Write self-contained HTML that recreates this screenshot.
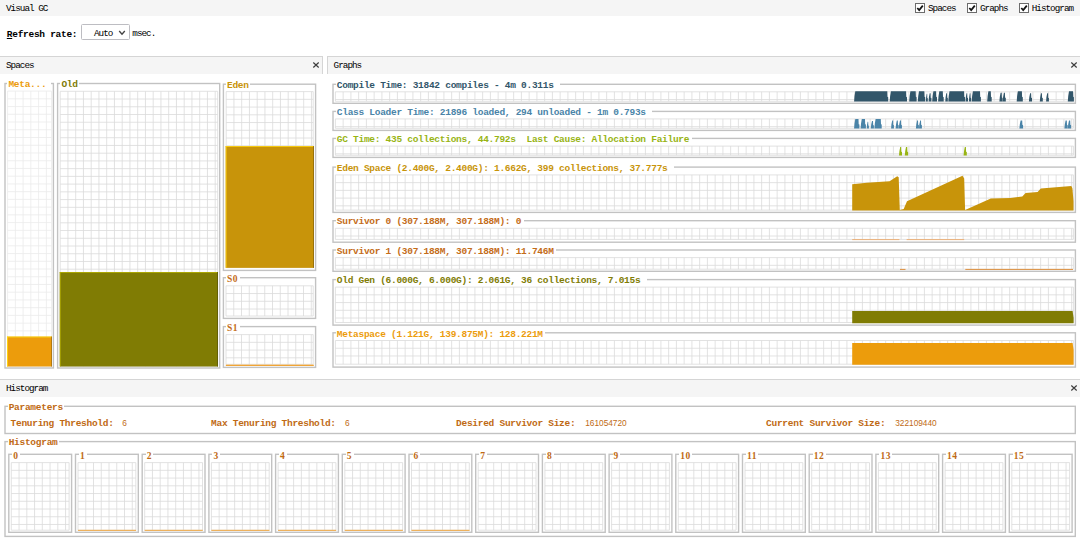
<!DOCTYPE html>
<html><head><meta charset="utf-8"><title>Visual GC</title>
<style>
html,body{margin:0;padding:0;background:#fff}
body{width:1080px;height:538px;position:relative;overflow:hidden;font-family:"Liberation Mono",monospace;font-size:9.3px;color:#000}
.band{position:absolute;background:#f5f5f5}
.ln{position:absolute;background:#d5d5d5}
svg.bg{position:absolute;left:0;top:0}
.fs{position:absolute;box-sizing:border-box;border:1px solid #bdbdbd;box-shadow:1px 1px 0 #eee}
.t,.lg{position:absolute;white-space:pre;line-height:12px;height:12px;margin-top:0.9px}
.r{letter-spacing:-0.98px}
.b{font-weight:bold;font-size:9.5px;letter-spacing:-0.28px}
.lg{margin-top:2.9px;line-height:10px;height:10px;background:#fff;padding:0 1.5px 0 1px;margin-left:-1px}
.sb{font-family:"Liberation Serif",serif;font-weight:bold;font-size:9.5px;letter-spacing:0.5px}
.v{font-family:"Liberation Sans",sans-serif;font-size:8.3px;margin-top:-0.8px}
.cb{position:absolute;box-sizing:border-box;width:10px;height:10px;border:1px solid #6c6c6c;background:#fff}
.sel{position:absolute;box-sizing:border-box;border:1px solid #bdbdc2;border-radius:1.5px;background:#fff}
</style></head>
<body>
<svg class="bg" width="1080" height="538" viewBox="0 0 1080 538">
<path d="M7.60 91.10V366.30M15.35 91.10V366.30M23.10 91.10V366.30M30.85 91.10V366.30M38.60 91.10V366.30M46.35 91.10V366.30M51.50 91.10V366.30M7.60 91.10H51.50M7.60 98.83H51.50M7.60 106.57H51.50M7.60 114.30H51.50M7.60 122.04H51.50M7.60 129.78H51.50M7.60 137.51H51.50M7.60 145.25H51.50M7.60 152.98H51.50M7.60 160.72H51.50M7.60 168.45H51.50M7.60 176.19H51.50M7.60 183.92H51.50M7.60 191.66H51.50M7.60 199.39H51.50M7.60 207.13H51.50M7.60 214.86H51.50M7.60 222.60H51.50M7.60 230.33H51.50M7.60 238.07H51.50M7.60 245.80H51.50M7.60 253.54H51.50M7.60 261.27H51.50M7.60 269.01H51.50M7.60 276.74H51.50M7.60 284.48H51.50M7.60 292.21H51.50M7.60 299.95H51.50M7.60 307.68H51.50M7.60 315.42H51.50M7.60 323.15H51.50M7.60 330.89H51.50M7.60 338.62H51.50M7.60 346.36H51.50M7.60 354.09H51.50M7.60 361.83H51.50M7.60 366.30H51.50" stroke="#ebebeb" stroke-width="0.8" fill="none"/>
<rect x="7.10" y="336.60" width="44.70" height="29.90" fill="#ec9c0c"/>
<rect x="7.10" y="336.60" width="44.70" height="0.80" fill="#ffde11"/>
<rect x="7.10" y="336.60" width="0.80" height="29.90" fill="#ffde11"/>
<rect x="51.00" y="336.60" width="0.80" height="29.90" fill="#a56d08"/>
<path d="M60.20 91.30V366.30M67.95 91.30V366.30M75.70 91.30V366.30M83.45 91.30V366.30M91.20 91.30V366.30M98.95 91.30V366.30M106.70 91.30V366.30M114.45 91.30V366.30M122.20 91.30V366.30M129.95 91.30V366.30M137.70 91.30V366.30M145.45 91.30V366.30M153.20 91.30V366.30M160.95 91.30V366.30M168.70 91.30V366.30M176.45 91.30V366.30M184.20 91.30V366.30M191.95 91.30V366.30M199.70 91.30V366.30M207.45 91.30V366.30M215.20 91.30V366.30M217.70 91.30V366.30M60.20 91.30H217.70M60.20 99.03H217.70M60.20 106.77H217.70M60.20 114.50H217.70M60.20 122.24H217.70M60.20 129.97H217.70M60.20 137.71H217.70M60.20 145.45H217.70M60.20 153.18H217.70M60.20 160.92H217.70M60.20 168.65H217.70M60.20 176.39H217.70M60.20 184.12H217.70M60.20 191.86H217.70M60.20 199.59H217.70M60.20 207.33H217.70M60.20 215.06H217.70M60.20 222.80H217.70M60.20 230.53H217.70M60.20 238.27H217.70M60.20 246.00H217.70M60.20 253.74H217.70M60.20 261.47H217.70M60.20 269.21H217.70M60.20 276.94H217.70M60.20 284.68H217.70M60.20 292.41H217.70M60.20 300.15H217.70M60.20 307.88H217.70M60.20 315.62H217.70M60.20 323.35H217.70M60.20 331.09H217.70M60.20 338.82H217.70M60.20 346.56H217.70M60.20 354.29H217.70M60.20 362.03H217.70M60.20 366.30H217.70" stroke="#dadada" stroke-width="0.8" fill="none"/>
<rect x="59.80" y="272.00" width="158.10" height="94.50" fill="#807c04"/>
<rect x="59.80" y="272.00" width="158.10" height="0.80" fill="#b6b105"/>
<rect x="59.80" y="272.00" width="0.80" height="94.50" fill="#b6b105"/>
<rect x="217.10" y="272.00" width="0.80" height="94.50" fill="#595602"/>
<path d="M226.20 91.60V267.60M233.95 91.60V267.60M241.70 91.60V267.60M249.45 91.60V267.60M257.20 91.60V267.60M264.95 91.60V267.60M272.70 91.60V267.60M280.45 91.60V267.60M288.20 91.60V267.60M295.95 91.60V267.60M303.70 91.60V267.60M311.45 91.60V267.60M313.20 91.60V267.60M226.20 91.60H313.20M226.20 99.33H313.20M226.20 107.07H313.20M226.20 114.80H313.20M226.20 122.54H313.20M226.20 130.28H313.20M226.20 138.01H313.20M226.20 145.75H313.20M226.20 153.48H313.20M226.20 161.22H313.20M226.20 168.95H313.20M226.20 176.69H313.20M226.20 184.42H313.20M226.20 192.16H313.20M226.20 199.89H313.20M226.20 207.63H313.20M226.20 215.36H313.20M226.20 223.10H313.20M226.20 230.83H313.20M226.20 238.57H313.20M226.20 246.30H313.20M226.20 254.04H313.20M226.20 261.77H313.20M226.20 267.60H313.20" stroke="#dadada" stroke-width="0.8" fill="none"/>
<rect x="225.70" y="146.10" width="88.20" height="121.75" fill="#c8940a"/>
<rect x="225.70" y="146.10" width="88.20" height="0.80" fill="#ffd30e"/>
<rect x="225.70" y="146.10" width="0.80" height="121.75" fill="#ffd30e"/>
<rect x="313.10" y="146.10" width="0.80" height="121.75" fill="#8c6707"/>
<path d="M226.00 285.80V316.00M233.75 285.80V316.00M241.50 285.80V316.00M249.25 285.80V316.00M257.00 285.80V316.00M264.75 285.80V316.00M272.50 285.80V316.00M280.25 285.80V316.00M288.00 285.80V316.00M295.75 285.80V316.00M303.50 285.80V316.00M311.25 285.80V316.00M313.20 285.80V316.00M226.00 285.80H313.20M226.00 293.54H313.20M226.00 301.27H313.20M226.00 309.01H313.20M226.00 316.00H313.20" stroke="#dadada" stroke-width="0.8" fill="none"/>
<path d="M226.00 334.60V364.30M233.75 334.60V364.30M241.50 334.60V364.30M249.25 334.60V364.30M257.00 334.60V364.30M264.75 334.60V364.30M272.50 334.60V364.30M280.25 334.60V364.30M288.00 334.60V364.30M295.75 334.60V364.30M303.50 334.60V364.30M311.25 334.60V364.30M313.20 334.60V364.30M226.00 334.60H313.20M226.00 342.34H313.20M226.00 350.07H313.20M226.00 357.81H313.20M226.00 364.30H313.20" stroke="#dadada" stroke-width="0.8" fill="none"/>
<rect x="225.80" y="364.70" width="88.00" height="1.20" fill="#f09c20"/>
<path d="M335.40 91.80V101.30M343.15 91.80V101.30M350.90 91.80V101.30M358.65 91.80V101.30M366.40 91.80V101.30M374.15 91.80V101.30M381.90 91.80V101.30M389.65 91.80V101.30M397.40 91.80V101.30M405.15 91.80V101.30M412.90 91.80V101.30M420.65 91.80V101.30M428.40 91.80V101.30M436.15 91.80V101.30M443.90 91.80V101.30M451.65 91.80V101.30M459.40 91.80V101.30M467.15 91.80V101.30M474.90 91.80V101.30M482.65 91.80V101.30M490.40 91.80V101.30M498.15 91.80V101.30M505.90 91.80V101.30M513.65 91.80V101.30M521.40 91.80V101.30M529.15 91.80V101.30M536.90 91.80V101.30M544.65 91.80V101.30M552.40 91.80V101.30M560.15 91.80V101.30M567.90 91.80V101.30M575.65 91.80V101.30M583.40 91.80V101.30M591.15 91.80V101.30M598.90 91.80V101.30M606.65 91.80V101.30M614.40 91.80V101.30M622.15 91.80V101.30M629.90 91.80V101.30M637.65 91.80V101.30M645.40 91.80V101.30M653.15 91.80V101.30M660.90 91.80V101.30M668.65 91.80V101.30M676.40 91.80V101.30M684.15 91.80V101.30M691.90 91.80V101.30M699.65 91.80V101.30M707.40 91.80V101.30M715.15 91.80V101.30M722.90 91.80V101.30M730.65 91.80V101.30M738.40 91.80V101.30M746.15 91.80V101.30M753.90 91.80V101.30M761.65 91.80V101.30M769.40 91.80V101.30M777.15 91.80V101.30M784.90 91.80V101.30M792.65 91.80V101.30M800.40 91.80V101.30M808.15 91.80V101.30M815.90 91.80V101.30M823.65 91.80V101.30M831.40 91.80V101.30M839.15 91.80V101.30M846.90 91.80V101.30M854.65 91.80V101.30M862.40 91.80V101.30M870.15 91.80V101.30M877.90 91.80V101.30M885.65 91.80V101.30M893.40 91.80V101.30M901.15 91.80V101.30M908.90 91.80V101.30M916.65 91.80V101.30M924.40 91.80V101.30M932.15 91.80V101.30M939.90 91.80V101.30M947.65 91.80V101.30M955.40 91.80V101.30M963.15 91.80V101.30M970.90 91.80V101.30M978.65 91.80V101.30M986.40 91.80V101.30M994.15 91.80V101.30M1001.90 91.80V101.30M1009.65 91.80V101.30M1017.40 91.80V101.30M1025.15 91.80V101.30M1032.90 91.80V101.30M1040.65 91.80V101.30M1048.40 91.80V101.30M1056.15 91.80V101.30M1063.90 91.80V101.30M1071.65 91.80V101.30M1073.40 91.80V101.30M335.40 91.80H1073.40M335.40 99.53H1073.40M335.40 101.30H1073.40" stroke="#dadada" stroke-width="0.8" fill="none"/>
<path d="M335.40 118.90V128.30M343.15 118.90V128.30M350.90 118.90V128.30M358.65 118.90V128.30M366.40 118.90V128.30M374.15 118.90V128.30M381.90 118.90V128.30M389.65 118.90V128.30M397.40 118.90V128.30M405.15 118.90V128.30M412.90 118.90V128.30M420.65 118.90V128.30M428.40 118.90V128.30M436.15 118.90V128.30M443.90 118.90V128.30M451.65 118.90V128.30M459.40 118.90V128.30M467.15 118.90V128.30M474.90 118.90V128.30M482.65 118.90V128.30M490.40 118.90V128.30M498.15 118.90V128.30M505.90 118.90V128.30M513.65 118.90V128.30M521.40 118.90V128.30M529.15 118.90V128.30M536.90 118.90V128.30M544.65 118.90V128.30M552.40 118.90V128.30M560.15 118.90V128.30M567.90 118.90V128.30M575.65 118.90V128.30M583.40 118.90V128.30M591.15 118.90V128.30M598.90 118.90V128.30M606.65 118.90V128.30M614.40 118.90V128.30M622.15 118.90V128.30M629.90 118.90V128.30M637.65 118.90V128.30M645.40 118.90V128.30M653.15 118.90V128.30M660.90 118.90V128.30M668.65 118.90V128.30M676.40 118.90V128.30M684.15 118.90V128.30M691.90 118.90V128.30M699.65 118.90V128.30M707.40 118.90V128.30M715.15 118.90V128.30M722.90 118.90V128.30M730.65 118.90V128.30M738.40 118.90V128.30M746.15 118.90V128.30M753.90 118.90V128.30M761.65 118.90V128.30M769.40 118.90V128.30M777.15 118.90V128.30M784.90 118.90V128.30M792.65 118.90V128.30M800.40 118.90V128.30M808.15 118.90V128.30M815.90 118.90V128.30M823.65 118.90V128.30M831.40 118.90V128.30M839.15 118.90V128.30M846.90 118.90V128.30M854.65 118.90V128.30M862.40 118.90V128.30M870.15 118.90V128.30M877.90 118.90V128.30M885.65 118.90V128.30M893.40 118.90V128.30M901.15 118.90V128.30M908.90 118.90V128.30M916.65 118.90V128.30M924.40 118.90V128.30M932.15 118.90V128.30M939.90 118.90V128.30M947.65 118.90V128.30M955.40 118.90V128.30M963.15 118.90V128.30M970.90 118.90V128.30M978.65 118.90V128.30M986.40 118.90V128.30M994.15 118.90V128.30M1001.90 118.90V128.30M1009.65 118.90V128.30M1017.40 118.90V128.30M1025.15 118.90V128.30M1032.90 118.90V128.30M1040.65 118.90V128.30M1048.40 118.90V128.30M1056.15 118.90V128.30M1063.90 118.90V128.30M1071.65 118.90V128.30M1073.40 118.90V128.30M335.40 118.90H1073.40M335.40 126.64H1073.40M335.40 128.30H1073.40" stroke="#dadada" stroke-width="0.8" fill="none"/>
<path d="M335.40 146.10V155.30M343.15 146.10V155.30M350.90 146.10V155.30M358.65 146.10V155.30M366.40 146.10V155.30M374.15 146.10V155.30M381.90 146.10V155.30M389.65 146.10V155.30M397.40 146.10V155.30M405.15 146.10V155.30M412.90 146.10V155.30M420.65 146.10V155.30M428.40 146.10V155.30M436.15 146.10V155.30M443.90 146.10V155.30M451.65 146.10V155.30M459.40 146.10V155.30M467.15 146.10V155.30M474.90 146.10V155.30M482.65 146.10V155.30M490.40 146.10V155.30M498.15 146.10V155.30M505.90 146.10V155.30M513.65 146.10V155.30M521.40 146.10V155.30M529.15 146.10V155.30M536.90 146.10V155.30M544.65 146.10V155.30M552.40 146.10V155.30M560.15 146.10V155.30M567.90 146.10V155.30M575.65 146.10V155.30M583.40 146.10V155.30M591.15 146.10V155.30M598.90 146.10V155.30M606.65 146.10V155.30M614.40 146.10V155.30M622.15 146.10V155.30M629.90 146.10V155.30M637.65 146.10V155.30M645.40 146.10V155.30M653.15 146.10V155.30M660.90 146.10V155.30M668.65 146.10V155.30M676.40 146.10V155.30M684.15 146.10V155.30M691.90 146.10V155.30M699.65 146.10V155.30M707.40 146.10V155.30M715.15 146.10V155.30M722.90 146.10V155.30M730.65 146.10V155.30M738.40 146.10V155.30M746.15 146.10V155.30M753.90 146.10V155.30M761.65 146.10V155.30M769.40 146.10V155.30M777.15 146.10V155.30M784.90 146.10V155.30M792.65 146.10V155.30M800.40 146.10V155.30M808.15 146.10V155.30M815.90 146.10V155.30M823.65 146.10V155.30M831.40 146.10V155.30M839.15 146.10V155.30M846.90 146.10V155.30M854.65 146.10V155.30M862.40 146.10V155.30M870.15 146.10V155.30M877.90 146.10V155.30M885.65 146.10V155.30M893.40 146.10V155.30M901.15 146.10V155.30M908.90 146.10V155.30M916.65 146.10V155.30M924.40 146.10V155.30M932.15 146.10V155.30M939.90 146.10V155.30M947.65 146.10V155.30M955.40 146.10V155.30M963.15 146.10V155.30M970.90 146.10V155.30M978.65 146.10V155.30M986.40 146.10V155.30M994.15 146.10V155.30M1001.90 146.10V155.30M1009.65 146.10V155.30M1017.40 146.10V155.30M1025.15 146.10V155.30M1032.90 146.10V155.30M1040.65 146.10V155.30M1048.40 146.10V155.30M1056.15 146.10V155.30M1063.90 146.10V155.30M1071.65 146.10V155.30M1073.40 146.10V155.30M335.40 146.10H1073.40M335.40 153.84H1073.40M335.40 155.30H1073.40" stroke="#dadada" stroke-width="0.8" fill="none"/>
<path d="M335.40 174.90V210.10M343.15 174.90V210.10M350.90 174.90V210.10M358.65 174.90V210.10M366.40 174.90V210.10M374.15 174.90V210.10M381.90 174.90V210.10M389.65 174.90V210.10M397.40 174.90V210.10M405.15 174.90V210.10M412.90 174.90V210.10M420.65 174.90V210.10M428.40 174.90V210.10M436.15 174.90V210.10M443.90 174.90V210.10M451.65 174.90V210.10M459.40 174.90V210.10M467.15 174.90V210.10M474.90 174.90V210.10M482.65 174.90V210.10M490.40 174.90V210.10M498.15 174.90V210.10M505.90 174.90V210.10M513.65 174.90V210.10M521.40 174.90V210.10M529.15 174.90V210.10M536.90 174.90V210.10M544.65 174.90V210.10M552.40 174.90V210.10M560.15 174.90V210.10M567.90 174.90V210.10M575.65 174.90V210.10M583.40 174.90V210.10M591.15 174.90V210.10M598.90 174.90V210.10M606.65 174.90V210.10M614.40 174.90V210.10M622.15 174.90V210.10M629.90 174.90V210.10M637.65 174.90V210.10M645.40 174.90V210.10M653.15 174.90V210.10M660.90 174.90V210.10M668.65 174.90V210.10M676.40 174.90V210.10M684.15 174.90V210.10M691.90 174.90V210.10M699.65 174.90V210.10M707.40 174.90V210.10M715.15 174.90V210.10M722.90 174.90V210.10M730.65 174.90V210.10M738.40 174.90V210.10M746.15 174.90V210.10M753.90 174.90V210.10M761.65 174.90V210.10M769.40 174.90V210.10M777.15 174.90V210.10M784.90 174.90V210.10M792.65 174.90V210.10M800.40 174.90V210.10M808.15 174.90V210.10M815.90 174.90V210.10M823.65 174.90V210.10M831.40 174.90V210.10M839.15 174.90V210.10M846.90 174.90V210.10M854.65 174.90V210.10M862.40 174.90V210.10M870.15 174.90V210.10M877.90 174.90V210.10M885.65 174.90V210.10M893.40 174.90V210.10M901.15 174.90V210.10M908.90 174.90V210.10M916.65 174.90V210.10M924.40 174.90V210.10M932.15 174.90V210.10M939.90 174.90V210.10M947.65 174.90V210.10M955.40 174.90V210.10M963.15 174.90V210.10M970.90 174.90V210.10M978.65 174.90V210.10M986.40 174.90V210.10M994.15 174.90V210.10M1001.90 174.90V210.10M1009.65 174.90V210.10M1017.40 174.90V210.10M1025.15 174.90V210.10M1032.90 174.90V210.10M1040.65 174.90V210.10M1048.40 174.90V210.10M1056.15 174.90V210.10M1063.90 174.90V210.10M1071.65 174.90V210.10M1073.40 174.90V210.10M335.40 174.90H1073.40M335.40 182.64H1073.40M335.40 190.37H1073.40M335.40 198.11H1073.40M335.40 205.84H1073.40M335.40 210.10H1073.40" stroke="#dadada" stroke-width="0.8" fill="none"/>
<path d="M335.40 228.30V239.40M343.15 228.30V239.40M350.90 228.30V239.40M358.65 228.30V239.40M366.40 228.30V239.40M374.15 228.30V239.40M381.90 228.30V239.40M389.65 228.30V239.40M397.40 228.30V239.40M405.15 228.30V239.40M412.90 228.30V239.40M420.65 228.30V239.40M428.40 228.30V239.40M436.15 228.30V239.40M443.90 228.30V239.40M451.65 228.30V239.40M459.40 228.30V239.40M467.15 228.30V239.40M474.90 228.30V239.40M482.65 228.30V239.40M490.40 228.30V239.40M498.15 228.30V239.40M505.90 228.30V239.40M513.65 228.30V239.40M521.40 228.30V239.40M529.15 228.30V239.40M536.90 228.30V239.40M544.65 228.30V239.40M552.40 228.30V239.40M560.15 228.30V239.40M567.90 228.30V239.40M575.65 228.30V239.40M583.40 228.30V239.40M591.15 228.30V239.40M598.90 228.30V239.40M606.65 228.30V239.40M614.40 228.30V239.40M622.15 228.30V239.40M629.90 228.30V239.40M637.65 228.30V239.40M645.40 228.30V239.40M653.15 228.30V239.40M660.90 228.30V239.40M668.65 228.30V239.40M676.40 228.30V239.40M684.15 228.30V239.40M691.90 228.30V239.40M699.65 228.30V239.40M707.40 228.30V239.40M715.15 228.30V239.40M722.90 228.30V239.40M730.65 228.30V239.40M738.40 228.30V239.40M746.15 228.30V239.40M753.90 228.30V239.40M761.65 228.30V239.40M769.40 228.30V239.40M777.15 228.30V239.40M784.90 228.30V239.40M792.65 228.30V239.40M800.40 228.30V239.40M808.15 228.30V239.40M815.90 228.30V239.40M823.65 228.30V239.40M831.40 228.30V239.40M839.15 228.30V239.40M846.90 228.30V239.40M854.65 228.30V239.40M862.40 228.30V239.40M870.15 228.30V239.40M877.90 228.30V239.40M885.65 228.30V239.40M893.40 228.30V239.40M901.15 228.30V239.40M908.90 228.30V239.40M916.65 228.30V239.40M924.40 228.30V239.40M932.15 228.30V239.40M939.90 228.30V239.40M947.65 228.30V239.40M955.40 228.30V239.40M963.15 228.30V239.40M970.90 228.30V239.40M978.65 228.30V239.40M986.40 228.30V239.40M994.15 228.30V239.40M1001.90 228.30V239.40M1009.65 228.30V239.40M1017.40 228.30V239.40M1025.15 228.30V239.40M1032.90 228.30V239.40M1040.65 228.30V239.40M1048.40 228.30V239.40M1056.15 228.30V239.40M1063.90 228.30V239.40M1071.65 228.30V239.40M1073.40 228.30V239.40M335.40 228.30H1073.40M335.40 236.04H1073.40M335.40 239.40H1073.40" stroke="#dadada" stroke-width="0.8" fill="none"/>
<path d="M335.40 257.60V269.20M343.15 257.60V269.20M350.90 257.60V269.20M358.65 257.60V269.20M366.40 257.60V269.20M374.15 257.60V269.20M381.90 257.60V269.20M389.65 257.60V269.20M397.40 257.60V269.20M405.15 257.60V269.20M412.90 257.60V269.20M420.65 257.60V269.20M428.40 257.60V269.20M436.15 257.60V269.20M443.90 257.60V269.20M451.65 257.60V269.20M459.40 257.60V269.20M467.15 257.60V269.20M474.90 257.60V269.20M482.65 257.60V269.20M490.40 257.60V269.20M498.15 257.60V269.20M505.90 257.60V269.20M513.65 257.60V269.20M521.40 257.60V269.20M529.15 257.60V269.20M536.90 257.60V269.20M544.65 257.60V269.20M552.40 257.60V269.20M560.15 257.60V269.20M567.90 257.60V269.20M575.65 257.60V269.20M583.40 257.60V269.20M591.15 257.60V269.20M598.90 257.60V269.20M606.65 257.60V269.20M614.40 257.60V269.20M622.15 257.60V269.20M629.90 257.60V269.20M637.65 257.60V269.20M645.40 257.60V269.20M653.15 257.60V269.20M660.90 257.60V269.20M668.65 257.60V269.20M676.40 257.60V269.20M684.15 257.60V269.20M691.90 257.60V269.20M699.65 257.60V269.20M707.40 257.60V269.20M715.15 257.60V269.20M722.90 257.60V269.20M730.65 257.60V269.20M738.40 257.60V269.20M746.15 257.60V269.20M753.90 257.60V269.20M761.65 257.60V269.20M769.40 257.60V269.20M777.15 257.60V269.20M784.90 257.60V269.20M792.65 257.60V269.20M800.40 257.60V269.20M808.15 257.60V269.20M815.90 257.60V269.20M823.65 257.60V269.20M831.40 257.60V269.20M839.15 257.60V269.20M846.90 257.60V269.20M854.65 257.60V269.20M862.40 257.60V269.20M870.15 257.60V269.20M877.90 257.60V269.20M885.65 257.60V269.20M893.40 257.60V269.20M901.15 257.60V269.20M908.90 257.60V269.20M916.65 257.60V269.20M924.40 257.60V269.20M932.15 257.60V269.20M939.90 257.60V269.20M947.65 257.60V269.20M955.40 257.60V269.20M963.15 257.60V269.20M970.90 257.60V269.20M978.65 257.60V269.20M986.40 257.60V269.20M994.15 257.60V269.20M1001.90 257.60V269.20M1009.65 257.60V269.20M1017.40 257.60V269.20M1025.15 257.60V269.20M1032.90 257.60V269.20M1040.65 257.60V269.20M1048.40 257.60V269.20M1056.15 257.60V269.20M1063.90 257.60V269.20M1071.65 257.60V269.20M1073.40 257.60V269.20M335.40 257.60H1073.40M335.40 265.34H1073.40M335.40 269.20H1073.40" stroke="#dadada" stroke-width="0.8" fill="none"/>
<path d="M335.40 287.10V322.50M343.15 287.10V322.50M350.90 287.10V322.50M358.65 287.10V322.50M366.40 287.10V322.50M374.15 287.10V322.50M381.90 287.10V322.50M389.65 287.10V322.50M397.40 287.10V322.50M405.15 287.10V322.50M412.90 287.10V322.50M420.65 287.10V322.50M428.40 287.10V322.50M436.15 287.10V322.50M443.90 287.10V322.50M451.65 287.10V322.50M459.40 287.10V322.50M467.15 287.10V322.50M474.90 287.10V322.50M482.65 287.10V322.50M490.40 287.10V322.50M498.15 287.10V322.50M505.90 287.10V322.50M513.65 287.10V322.50M521.40 287.10V322.50M529.15 287.10V322.50M536.90 287.10V322.50M544.65 287.10V322.50M552.40 287.10V322.50M560.15 287.10V322.50M567.90 287.10V322.50M575.65 287.10V322.50M583.40 287.10V322.50M591.15 287.10V322.50M598.90 287.10V322.50M606.65 287.10V322.50M614.40 287.10V322.50M622.15 287.10V322.50M629.90 287.10V322.50M637.65 287.10V322.50M645.40 287.10V322.50M653.15 287.10V322.50M660.90 287.10V322.50M668.65 287.10V322.50M676.40 287.10V322.50M684.15 287.10V322.50M691.90 287.10V322.50M699.65 287.10V322.50M707.40 287.10V322.50M715.15 287.10V322.50M722.90 287.10V322.50M730.65 287.10V322.50M738.40 287.10V322.50M746.15 287.10V322.50M753.90 287.10V322.50M761.65 287.10V322.50M769.40 287.10V322.50M777.15 287.10V322.50M784.90 287.10V322.50M792.65 287.10V322.50M800.40 287.10V322.50M808.15 287.10V322.50M815.90 287.10V322.50M823.65 287.10V322.50M831.40 287.10V322.50M839.15 287.10V322.50M846.90 287.10V322.50M854.65 287.10V322.50M862.40 287.10V322.50M870.15 287.10V322.50M877.90 287.10V322.50M885.65 287.10V322.50M893.40 287.10V322.50M901.15 287.10V322.50M908.90 287.10V322.50M916.65 287.10V322.50M924.40 287.10V322.50M932.15 287.10V322.50M939.90 287.10V322.50M947.65 287.10V322.50M955.40 287.10V322.50M963.15 287.10V322.50M970.90 287.10V322.50M978.65 287.10V322.50M986.40 287.10V322.50M994.15 287.10V322.50M1001.90 287.10V322.50M1009.65 287.10V322.50M1017.40 287.10V322.50M1025.15 287.10V322.50M1032.90 287.10V322.50M1040.65 287.10V322.50M1048.40 287.10V322.50M1056.15 287.10V322.50M1063.90 287.10V322.50M1071.65 287.10V322.50M1073.40 287.10V322.50M335.40 287.10H1073.40M335.40 294.84H1073.40M335.40 302.57H1073.40M335.40 310.31H1073.40M335.40 318.04H1073.40M335.40 322.50H1073.40" stroke="#dadada" stroke-width="0.8" fill="none"/>
<path d="M335.40 340.50V364.20M343.15 340.50V364.20M350.90 340.50V364.20M358.65 340.50V364.20M366.40 340.50V364.20M374.15 340.50V364.20M381.90 340.50V364.20M389.65 340.50V364.20M397.40 340.50V364.20M405.15 340.50V364.20M412.90 340.50V364.20M420.65 340.50V364.20M428.40 340.50V364.20M436.15 340.50V364.20M443.90 340.50V364.20M451.65 340.50V364.20M459.40 340.50V364.20M467.15 340.50V364.20M474.90 340.50V364.20M482.65 340.50V364.20M490.40 340.50V364.20M498.15 340.50V364.20M505.90 340.50V364.20M513.65 340.50V364.20M521.40 340.50V364.20M529.15 340.50V364.20M536.90 340.50V364.20M544.65 340.50V364.20M552.40 340.50V364.20M560.15 340.50V364.20M567.90 340.50V364.20M575.65 340.50V364.20M583.40 340.50V364.20M591.15 340.50V364.20M598.90 340.50V364.20M606.65 340.50V364.20M614.40 340.50V364.20M622.15 340.50V364.20M629.90 340.50V364.20M637.65 340.50V364.20M645.40 340.50V364.20M653.15 340.50V364.20M660.90 340.50V364.20M668.65 340.50V364.20M676.40 340.50V364.20M684.15 340.50V364.20M691.90 340.50V364.20M699.65 340.50V364.20M707.40 340.50V364.20M715.15 340.50V364.20M722.90 340.50V364.20M730.65 340.50V364.20M738.40 340.50V364.20M746.15 340.50V364.20M753.90 340.50V364.20M761.65 340.50V364.20M769.40 340.50V364.20M777.15 340.50V364.20M784.90 340.50V364.20M792.65 340.50V364.20M800.40 340.50V364.20M808.15 340.50V364.20M815.90 340.50V364.20M823.65 340.50V364.20M831.40 340.50V364.20M839.15 340.50V364.20M846.90 340.50V364.20M854.65 340.50V364.20M862.40 340.50V364.20M870.15 340.50V364.20M877.90 340.50V364.20M885.65 340.50V364.20M893.40 340.50V364.20M901.15 340.50V364.20M908.90 340.50V364.20M916.65 340.50V364.20M924.40 340.50V364.20M932.15 340.50V364.20M939.90 340.50V364.20M947.65 340.50V364.20M955.40 340.50V364.20M963.15 340.50V364.20M970.90 340.50V364.20M978.65 340.50V364.20M986.40 340.50V364.20M994.15 340.50V364.20M1001.90 340.50V364.20M1009.65 340.50V364.20M1017.40 340.50V364.20M1025.15 340.50V364.20M1032.90 340.50V364.20M1040.65 340.50V364.20M1048.40 340.50V364.20M1056.15 340.50V364.20M1063.90 340.50V364.20M1071.65 340.50V364.20M1073.40 340.50V364.20M335.40 340.50H1073.40M335.40 348.24H1073.40M335.40 355.97H1073.40M335.40 364.20H1073.40" stroke="#dadada" stroke-width="0.8" fill="none"/>
<polygon points="854.1,101.4 854.5,96.3 855.3,91.2 887.3,91.2 887.5,96.8 888.2,97.3 888.2,101.4" fill="#32566a"/>
<polygon points="889.7,101.4 890.1,96.3 890.9,91.2 906.1,91.2 906.3,96.8 907.0,97.3 907.0,101.4" fill="#32566a"/>
<polygon points="909.2,101.4 909.6,96.3 910.4,91.2 915.7,91.2 915.9,96.8 916.6,97.3 916.6,101.4" fill="#32566a"/>
<polygon points="917.8,101.4 918.2,96.3 919.0,91.2 924.3,91.2 924.5,96.8 925.2,97.3 925.2,101.4" fill="#32566a"/>
<polygon points="925.9,101.4 926.1,97.6 926.7,93.8 927.2,93.8 927.3,98.0 927.8,98.3 927.8,101.4" fill="#32566a"/>
<polygon points="928.6,101.4 928.9,97.3 929.7,93.2 930.6,93.2 930.7,97.7 931.4,98.1 931.4,101.4" fill="#32566a"/>
<polygon points="932.2,101.4 932.6,96.3 933.4,91.2 936.1,91.2 936.3,96.8 937.0,97.3 937.0,101.4" fill="#32566a"/>
<polygon points="938.1,101.4 938.5,96.3 939.3,91.2 942.8,91.2 943.0,96.8 943.7,97.3 943.7,101.4" fill="#32566a"/>
<polygon points="945.3,101.4 945.6,97.3 946.3,93.2 947.0,93.2 947.2,97.7 947.8,98.1 947.8,101.4" fill="#32566a"/>
<polygon points="948.3,101.4 948.7,96.3 949.5,91.2 964.1,91.2 964.3,96.8 965.0,97.3 965.0,101.4" fill="#32566a"/>
<polygon points="965.5,101.4 965.8,97.3 966.5,93.2 967.2,93.2 967.4,97.7 968.0,98.1 968.0,101.4" fill="#32566a"/>
<polygon points="968.9,101.4 969.2,97.3 969.8,93.2 970.4,93.2 970.6,97.7 971.1,98.1 971.1,101.4" fill="#32566a"/>
<polygon points="971.7,101.4 972.1,96.3 972.9,91.2 980.0,91.2 980.2,96.8 980.9,97.3 980.9,101.4" fill="#32566a"/>
<polygon points="987.2,101.4 987.6,96.3 988.4,91.2 990.8,91.2 991.0,96.8 991.7,97.3 991.7,101.4" fill="#32566a"/>
<polygon points="999.4,101.4 999.8,97.1 1000.6,92.7 1001.7,92.7 1001.9,97.5 1002.6,97.9 1002.6,101.4" fill="#32566a"/>
<polygon points="1002.7,101.4 1003.1,97.1 1003.9,92.7 1004.9,92.7 1005.1,97.5 1005.8,97.9 1005.8,101.4" fill="#32566a"/>
<polygon points="1016.7,101.4 1017.1,96.3 1017.9,91.2 1021.9,91.2 1022.1,96.8 1022.8,97.3 1022.8,101.4" fill="#32566a"/>
<polygon points="1028.9,101.4 1029.3,97.3 1030.1,93.2 1031.1,93.2 1031.3,97.7 1032.0,98.1 1032.0,101.4" fill="#32566a"/>
<polygon points="1039.8,101.4 1040.2,97.3 1041.0,93.2 1041.9,93.2 1042.1,97.7 1042.8,98.1 1042.8,101.4" fill="#32566a"/>
<polygon points="1046.1,101.4 1046.4,97.3 1047.2,93.2 1048.1,93.2 1048.2,97.7 1048.9,98.1 1048.9,101.4" fill="#32566a"/>
<polygon points="1067.8,101.4 1068.2,96.3 1069.0,91.2 1073.0,91.2 1073.2,96.8 1073.9,97.3 1073.9,101.4" fill="#32566a"/>
<polygon points="854.1,128.4 854.5,123.7 855.3,119.0 858.5,119.0 858.7,124.2 859.4,124.6 859.4,128.4" fill="#4a84a8"/>
<polygon points="860.6,128.4 861.0,123.7 861.8,119.0 865.0,119.0 865.2,124.2 865.9,124.6 865.9,128.4" fill="#4a84a8"/>
<polygon points="866.7,128.4 867.0,125.1 867.6,121.8 868.2,121.8 868.4,125.4 868.9,125.8 868.9,128.4" fill="#4a84a8"/>
<polygon points="870.8,128.4 871.2,124.6 872.0,120.9 873.0,120.9 873.2,125.0 873.9,125.4 873.9,128.4" fill="#4a84a8"/>
<polygon points="874.4,128.4 874.8,123.7 875.6,119.0 880.8,119.0 881.0,124.2 881.7,124.6 881.7,128.4" fill="#4a84a8"/>
<polygon points="891.1,128.4 891.4,124.4 892.2,120.4 893.1,120.4 893.2,124.8 893.9,125.2 893.9,128.4" fill="#4a84a8"/>
<polygon points="895.6,128.4 896.0,124.4 896.8,120.4 897.8,120.4 898.0,124.8 898.7,125.2 898.7,128.4" fill="#4a84a8"/>
<polygon points="898.8,128.4 899.2,124.4 900.0,120.4 901.0,120.4 901.2,124.8 901.9,125.2 901.9,128.4" fill="#4a84a8"/>
<polygon points="915.9,128.4 916.3,124.4 917.1,120.4 918.0,120.4 918.2,124.8 918.9,125.2 918.9,128.4" fill="#4a84a8"/>
<polygon points="919.0,128.4 919.3,124.4 920.2,120.4 921.0,120.4 921.2,124.8 921.9,125.2 921.9,128.4" fill="#4a84a8"/>
<polygon points="1019.4,128.4 1019.8,124.4 1020.6,120.4 1022.2,120.4 1022.4,124.8 1023.1,125.2 1023.1,128.4" fill="#4a84a8"/>
<polygon points="1064.4,128.4 1064.8,124.4 1065.6,120.4 1066.8,120.4 1067.0,124.8 1067.7,125.2 1067.7,128.4" fill="#4a84a8"/>
<polygon points="1067.8,128.4 1068.2,124.4 1069.0,120.4 1070.2,120.4 1070.4,124.8 1071.1,125.2 1071.1,128.4" fill="#4a84a8"/>
<polygon points="899.0,155.6 899.4,151.2 900.2,146.9 901.1,146.9 901.3,151.7 902.0,152.1 902.0,155.6" fill="#98b414"/>
<polygon points="904.8,155.6 905.2,151.2 906.0,146.9 907.2,146.9 907.4,151.7 908.1,152.1 908.1,155.6" fill="#98b414"/>
<polygon points="963.6,155.6 964.0,151.2 964.8,146.9 965.9,146.9 966.1,151.7 966.8,152.1 966.8,155.6" fill="#98b414"/>
<polygon points="852.2,210.4 852.2,184.3 866.8,182.8 889.6,181.3 897.2,176.3 898.7,177.3 899.8,210.0 903.7,208.9 907.0,201.3 962.5,175.8 964.2,178.4 965.1,210.0 990.8,198.4 1010.4,198.0 1022.3,196.5 1025.6,193.0 1037.6,191.9 1040.8,188.6 1071.3,186.0 1072.4,188.2 1073.5,201.3 1073.5,210.4" fill="#c8940a"/>
<rect x="852.20" y="239.10" width="47.20" height="1.00" fill="#eab078"/>
<rect x="906.60" y="239.10" width="57.60" height="1.00" fill="#eab078"/>
<rect x="900.00" y="268.90" width="5.50" height="1.00" fill="#dc9040"/>
<rect x="965.30" y="268.90" width="107.70" height="1.00" fill="#dc9040"/>
<polygon points="852.2,311.1 1072.6,311.1 1073.6,318.0 1073.6,323.2 852.2,323.2" fill="#807c04"/>
<polygon points="852.2,342.9 1072.6,342.9 1073.6,350.0 1073.6,364.7 852.2,364.7" fill="#ec9c0c"/>
<path d="M11.30 462.60V530.20M19.05 462.60V530.20M26.80 462.60V530.20M34.55 462.60V530.20M42.30 462.60V530.20M50.05 462.60V530.20M57.80 462.60V530.20M65.55 462.60V530.20M69.10 462.60V530.20M11.30 462.60H69.10M11.30 470.34H69.10M11.30 478.07H69.10M11.30 485.81H69.10M11.30 493.54H69.10M11.30 501.28H69.10M11.30 509.01H69.10M11.30 516.75H69.10M11.30 524.48H69.10M11.30 530.20H69.10" stroke="#dadada" stroke-width="0.8" fill="none"/>
<path d="M78.00 462.60V530.20M85.75 462.60V530.20M93.50 462.60V530.20M101.25 462.60V530.20M109.00 462.60V530.20M116.75 462.60V530.20M124.50 462.60V530.20M132.25 462.60V530.20M135.80 462.60V530.20M78.00 462.60H135.80M78.00 470.34H135.80M78.00 478.07H135.80M78.00 485.81H135.80M78.00 493.54H135.80M78.00 501.28H135.80M78.00 509.01H135.80M78.00 516.75H135.80M78.00 524.48H135.80M78.00 530.20H135.80" stroke="#dadada" stroke-width="0.8" fill="none"/>
<rect x="77.90" y="529.85" width="58.20" height="0.90" fill="#f0a030"/>
<path d="M144.70 462.60V530.20M152.45 462.60V530.20M160.20 462.60V530.20M167.95 462.60V530.20M175.70 462.60V530.20M183.45 462.60V530.20M191.20 462.60V530.20M198.95 462.60V530.20M202.50 462.60V530.20M144.70 462.60H202.50M144.70 470.34H202.50M144.70 478.07H202.50M144.70 485.81H202.50M144.70 493.54H202.50M144.70 501.28H202.50M144.70 509.01H202.50M144.70 516.75H202.50M144.70 524.48H202.50M144.70 530.20H202.50" stroke="#dadada" stroke-width="0.8" fill="none"/>
<rect x="144.60" y="529.85" width="58.20" height="0.90" fill="#f0a030"/>
<path d="M211.40 462.60V530.20M219.15 462.60V530.20M226.90 462.60V530.20M234.65 462.60V530.20M242.40 462.60V530.20M250.15 462.60V530.20M257.90 462.60V530.20M265.65 462.60V530.20M269.20 462.60V530.20M211.40 462.60H269.20M211.40 470.34H269.20M211.40 478.07H269.20M211.40 485.81H269.20M211.40 493.54H269.20M211.40 501.28H269.20M211.40 509.01H269.20M211.40 516.75H269.20M211.40 524.48H269.20M211.40 530.20H269.20" stroke="#dadada" stroke-width="0.8" fill="none"/>
<rect x="211.30" y="529.85" width="58.20" height="0.90" fill="#f0a030"/>
<path d="M278.10 462.60V530.20M285.85 462.60V530.20M293.60 462.60V530.20M301.35 462.60V530.20M309.10 462.60V530.20M316.85 462.60V530.20M324.60 462.60V530.20M332.35 462.60V530.20M335.90 462.60V530.20M278.10 462.60H335.90M278.10 470.34H335.90M278.10 478.07H335.90M278.10 485.81H335.90M278.10 493.54H335.90M278.10 501.28H335.90M278.10 509.01H335.90M278.10 516.75H335.90M278.10 524.48H335.90M278.10 530.20H335.90" stroke="#dadada" stroke-width="0.8" fill="none"/>
<rect x="278.00" y="529.85" width="58.20" height="0.90" fill="#f0a030"/>
<path d="M344.80 462.60V530.20M352.55 462.60V530.20M360.30 462.60V530.20M368.05 462.60V530.20M375.80 462.60V530.20M383.55 462.60V530.20M391.30 462.60V530.20M399.05 462.60V530.20M402.60 462.60V530.20M344.80 462.60H402.60M344.80 470.34H402.60M344.80 478.07H402.60M344.80 485.81H402.60M344.80 493.54H402.60M344.80 501.28H402.60M344.80 509.01H402.60M344.80 516.75H402.60M344.80 524.48H402.60M344.80 530.20H402.60" stroke="#dadada" stroke-width="0.8" fill="none"/>
<rect x="344.70" y="529.85" width="58.20" height="0.90" fill="#f0a030"/>
<path d="M411.50 462.60V530.20M419.25 462.60V530.20M427.00 462.60V530.20M434.75 462.60V530.20M442.50 462.60V530.20M450.25 462.60V530.20M458.00 462.60V530.20M465.75 462.60V530.20M469.30 462.60V530.20M411.50 462.60H469.30M411.50 470.34H469.30M411.50 478.07H469.30M411.50 485.81H469.30M411.50 493.54H469.30M411.50 501.28H469.30M411.50 509.01H469.30M411.50 516.75H469.30M411.50 524.48H469.30M411.50 530.20H469.30" stroke="#dadada" stroke-width="0.8" fill="none"/>
<rect x="411.40" y="529.85" width="58.20" height="0.90" fill="#f0a030"/>
<path d="M478.20 462.60V530.20M485.95 462.60V530.20M493.70 462.60V530.20M501.45 462.60V530.20M509.20 462.60V530.20M516.95 462.60V530.20M524.70 462.60V530.20M532.45 462.60V530.20M536.00 462.60V530.20M478.20 462.60H536.00M478.20 470.34H536.00M478.20 478.07H536.00M478.20 485.81H536.00M478.20 493.54H536.00M478.20 501.28H536.00M478.20 509.01H536.00M478.20 516.75H536.00M478.20 524.48H536.00M478.20 530.20H536.00" stroke="#dadada" stroke-width="0.8" fill="none"/>
<path d="M544.90 462.60V530.20M552.65 462.60V530.20M560.40 462.60V530.20M568.15 462.60V530.20M575.90 462.60V530.20M583.65 462.60V530.20M591.40 462.60V530.20M599.15 462.60V530.20M602.70 462.60V530.20M544.90 462.60H602.70M544.90 470.34H602.70M544.90 478.07H602.70M544.90 485.81H602.70M544.90 493.54H602.70M544.90 501.28H602.70M544.90 509.01H602.70M544.90 516.75H602.70M544.90 524.48H602.70M544.90 530.20H602.70" stroke="#dadada" stroke-width="0.8" fill="none"/>
<path d="M611.60 462.60V530.20M619.35 462.60V530.20M627.10 462.60V530.20M634.85 462.60V530.20M642.60 462.60V530.20M650.35 462.60V530.20M658.10 462.60V530.20M665.85 462.60V530.20M669.40 462.60V530.20M611.60 462.60H669.40M611.60 470.34H669.40M611.60 478.07H669.40M611.60 485.81H669.40M611.60 493.54H669.40M611.60 501.28H669.40M611.60 509.01H669.40M611.60 516.75H669.40M611.60 524.48H669.40M611.60 530.20H669.40" stroke="#dadada" stroke-width="0.8" fill="none"/>
<path d="M678.30 462.60V530.20M686.05 462.60V530.20M693.80 462.60V530.20M701.55 462.60V530.20M709.30 462.60V530.20M717.05 462.60V530.20M724.80 462.60V530.20M732.55 462.60V530.20M736.10 462.60V530.20M678.30 462.60H736.10M678.30 470.34H736.10M678.30 478.07H736.10M678.30 485.81H736.10M678.30 493.54H736.10M678.30 501.28H736.10M678.30 509.01H736.10M678.30 516.75H736.10M678.30 524.48H736.10M678.30 530.20H736.10" stroke="#dadada" stroke-width="0.8" fill="none"/>
<path d="M745.00 462.60V530.20M752.75 462.60V530.20M760.50 462.60V530.20M768.25 462.60V530.20M776.00 462.60V530.20M783.75 462.60V530.20M791.50 462.60V530.20M799.25 462.60V530.20M802.80 462.60V530.20M745.00 462.60H802.80M745.00 470.34H802.80M745.00 478.07H802.80M745.00 485.81H802.80M745.00 493.54H802.80M745.00 501.28H802.80M745.00 509.01H802.80M745.00 516.75H802.80M745.00 524.48H802.80M745.00 530.20H802.80" stroke="#dadada" stroke-width="0.8" fill="none"/>
<path d="M811.70 462.60V530.20M819.45 462.60V530.20M827.20 462.60V530.20M834.95 462.60V530.20M842.70 462.60V530.20M850.45 462.60V530.20M858.20 462.60V530.20M865.95 462.60V530.20M869.50 462.60V530.20M811.70 462.60H869.50M811.70 470.34H869.50M811.70 478.07H869.50M811.70 485.81H869.50M811.70 493.54H869.50M811.70 501.28H869.50M811.70 509.01H869.50M811.70 516.75H869.50M811.70 524.48H869.50M811.70 530.20H869.50" stroke="#dadada" stroke-width="0.8" fill="none"/>
<path d="M878.40 462.60V530.20M886.15 462.60V530.20M893.90 462.60V530.20M901.65 462.60V530.20M909.40 462.60V530.20M917.15 462.60V530.20M924.90 462.60V530.20M932.65 462.60V530.20M936.20 462.60V530.20M878.40 462.60H936.20M878.40 470.34H936.20M878.40 478.07H936.20M878.40 485.81H936.20M878.40 493.54H936.20M878.40 501.28H936.20M878.40 509.01H936.20M878.40 516.75H936.20M878.40 524.48H936.20M878.40 530.20H936.20" stroke="#dadada" stroke-width="0.8" fill="none"/>
<path d="M945.10 462.60V530.20M952.85 462.60V530.20M960.60 462.60V530.20M968.35 462.60V530.20M976.10 462.60V530.20M983.85 462.60V530.20M991.60 462.60V530.20M999.35 462.60V530.20M1002.90 462.60V530.20M945.10 462.60H1002.90M945.10 470.34H1002.90M945.10 478.07H1002.90M945.10 485.81H1002.90M945.10 493.54H1002.90M945.10 501.28H1002.90M945.10 509.01H1002.90M945.10 516.75H1002.90M945.10 524.48H1002.90M945.10 530.20H1002.90" stroke="#dadada" stroke-width="0.8" fill="none"/>
<path d="M1011.80 462.60V530.20M1019.55 462.60V530.20M1027.30 462.60V530.20M1035.05 462.60V530.20M1042.80 462.60V530.20M1050.55 462.60V530.20M1058.30 462.60V530.20M1066.05 462.60V530.20M1069.60 462.60V530.20M1011.80 462.60H1069.60M1011.80 470.34H1069.60M1011.80 478.07H1069.60M1011.80 485.81H1069.60M1011.80 493.54H1069.60M1011.80 501.28H1069.60M1011.80 509.01H1069.60M1011.80 516.75H1069.60M1011.80 524.48H1069.60M1011.80 530.20H1069.60" stroke="#dadada" stroke-width="0.8" fill="none"/>
<g fill="none" stroke="#c2c2c2" stroke-width="1.4"><rect x="5.00" y="83.50" width="48.40" height="284.50"/><rect x="57.60" y="83.50" width="162.10" height="284.50"/><rect x="223.40" y="84.20" width="92.20" height="186.20"/><rect x="223.40" y="277.70" width="92.20" height="40.70"/><rect x="223.40" y="326.60" width="92.20" height="40.80"/><rect x="333.00" y="84.30" width="742.40" height="19.00"/><rect x="333.00" y="111.40" width="742.40" height="19.00"/><rect x="333.00" y="138.40" width="742.40" height="19.00"/><rect x="333.00" y="167.10" width="742.40" height="45.30"/><rect x="333.00" y="220.70" width="742.40" height="21.50"/><rect x="333.00" y="250.00" width="742.40" height="21.30"/><rect x="333.00" y="279.60" width="742.40" height="45.50"/><rect x="333.00" y="332.80" width="742.40" height="34.30"/><rect x="5.00" y="406.30" width="1070.30" height="27.20"/><rect x="5.00" y="441.60" width="1070.30" height="94.80"/><rect x="8.80" y="454.30" width="62.80" height="78.00"/><rect x="75.50" y="454.30" width="62.80" height="78.00"/><rect x="142.20" y="454.30" width="62.80" height="78.00"/><rect x="208.90" y="454.30" width="62.80" height="78.00"/><rect x="275.60" y="454.30" width="62.80" height="78.00"/><rect x="342.30" y="454.30" width="62.80" height="78.00"/><rect x="409.00" y="454.30" width="62.80" height="78.00"/><rect x="475.70" y="454.30" width="62.80" height="78.00"/><rect x="542.40" y="454.30" width="62.80" height="78.00"/><rect x="609.10" y="454.30" width="62.80" height="78.00"/><rect x="675.80" y="454.30" width="62.80" height="78.00"/><rect x="742.50" y="454.30" width="62.80" height="78.00"/><rect x="809.20" y="454.30" width="62.80" height="78.00"/><rect x="875.90" y="454.30" width="62.80" height="78.00"/><rect x="942.60" y="454.30" width="62.80" height="78.00"/><rect x="1009.30" y="454.30" width="62.80" height="78.00"/></g>
</svg>
<div class="band" style="left:0;top:0;width:1080px;height:16px"></div>
<span class="t r" style="left:6px;top:2px">Visual GC</span>
<div class="cb" style="left:915px;top:3px"><svg width="8" height="8" viewBox="0 0 8 8" style="position:absolute;left:0;top:0"><path d="M1.3 4.0L3.2 6.1L6.8 1.6" stroke="#151515" stroke-width="1.75" fill="none"/></svg></div>
<span class="t r" style="left:928px;top:2.6px">Spaces</span>
<div class="cb" style="left:967px;top:3px"><svg width="8" height="8" viewBox="0 0 8 8" style="position:absolute;left:0;top:0"><path d="M1.3 4.0L3.2 6.1L6.8 1.6" stroke="#151515" stroke-width="1.75" fill="none"/></svg></div>
<span class="t r" style="left:980px;top:2.6px">Graphs</span>
<div class="cb" style="left:1019.2px;top:3px"><svg width="8" height="8" viewBox="0 0 8 8" style="position:absolute;left:0;top:0"><path d="M1.3 4.0L3.2 6.1L6.8 1.6" stroke="#151515" stroke-width="1.75" fill="none"/></svg></div>
<span class="t r" style="left:1031.7px;top:2.6px">Histogram</span>
<span class="t b" style="left:6.8px;top:27.9px"><u>R</u>efresh rate:</span>
<div class="sel" style="left:81px;top:24px;width:48.5px;height:16.4px"></div>
<span class="t r" style="left:94px;top:27.4px">Auto</span>
<svg style="position:absolute;left:118.2px;top:30.3px" width="8" height="6" viewBox="0 0 8 6"><path d="M1.2 1.0L4 4.3L6.8 1.0" stroke="#444" stroke-width="1.35" fill="none"/></svg>
<span class="t r" style="left:132.3px;top:27.4px">msec.</span>
<div class="ln" style="left:0;top:56px;width:322.5px;height:1px"></div>
<div class="ln" style="left:327px;top:56px;width:753px;height:1px"></div>
<div class="band" style="left:0;top:57px;width:322px;height:16.5px"></div>
<div class="ln" style="left:322px;top:56px;width:1px;height:17.5px"></div>
<div class="ln" style="left:327px;top:56px;width:1px;height:17.5px"></div>
<div class="band" style="left:328px;top:57px;width:752px;height:16.5px"></div>
<span class="t r" style="left:6px;top:59.4px">Spaces</span>
<span class="t r" style="left:333.6px;top:59.4px">Graphs</span>
<div class="ln" style="left:0;top:379px;width:1080px;height:1px"></div>
<div class="band" style="left:0;top:380px;width:1080px;height:16.5px"></div>
<span class="t r" style="left:6px;top:382.6px">Histogram</span>
<svg style="position:absolute;left:311.5px;top:60.8px" width="8" height="8" viewBox="0 0 8 8"><path d="M1.3 1.5L6.7 6.5M6.7 1.5L1.3 6.5" stroke="#3c3c3c" stroke-width="1.15" fill="none"/></svg>
<svg style="position:absolute;left:1070.4px;top:60.900000000000006px" width="8" height="8" viewBox="0 0 8 8"><path d="M1.3 1.5L6.7 6.5M6.7 1.5L1.3 6.5" stroke="#3c3c3c" stroke-width="1.15" fill="none"/></svg>
<svg style="position:absolute;left:1070.4px;top:383.5px" width="8" height="8" viewBox="0 0 8 8"><path d="M1.3 1.5L6.7 6.5M6.7 1.5L1.3 6.5" stroke="#3c3c3c" stroke-width="1.15" fill="none"/></svg>
<span class="lg b" style="left:8.40px;top:77.50px;color:#ec9c0c;padding-right:4.5px;margin-top:2.6px">Meta...</span>
<span class="lg b" style="left:61.40px;top:77.50px;color:#807c04;margin-top:2.6px">Old</span>
<span class="lg b" style="left:227.00px;top:78.20px;color:#c8940a">Eden</span>
<span class="lg sb" style="left:227.00px;top:271.70px;color:#c46c18;margin-top:1.9px">S0</span>
<span class="lg sb" style="left:227.00px;top:320.60px;color:#c46c18">S1</span>
<span class="lg b" style="left:336.80px;top:78.30px;color:#32566a;padding-right:6.5px">Compile Time: 31842 compiles - 4m 0.311s</span>
<span class="lg b" style="left:336.80px;top:105.40px;color:#4a84a8;padding-right:6.5px">Class Loader Time: 21896 loaded, 294 unloaded - 1m 0.793s</span>
<span class="lg b" style="left:336.80px;top:132.40px;color:#98b414;padding-right:2.5px">GC Time: 435 collections, 44.792s&nbsp; Last Cause: Allocation Failure</span>
<span class="lg b" style="left:336.80px;top:161.10px;color:#c8940a;padding-right:6.5px">Eden Space (2.400G, 2.400G): 1.662G, 399 collections, 37.777s</span>
<span class="lg b" style="left:336.80px;top:214.70px;color:#c46c18;padding-right:2.5px;margin-top:2.0px">Survivor 0 (307.188M, 307.188M): 0</span>
<span class="lg b" style="left:336.80px;top:244.00px;color:#c46c18;padding-right:2.5px">Survivor 1 (307.188M, 307.188M): 11.746M</span>
<span class="lg b" style="left:336.80px;top:273.60px;color:#807c04;padding-right:6.5px">Old Gen (6.000G, 6.000G): 2.061G, 36 collections, 7.015s</span>
<span class="lg b" style="left:336.80px;top:326.80px;color:#ec9c0c;padding-right:2.5px">Metaspace (1.121G, 139.875M): 128.221M</span>
<span class="lg b" style="left:8.70px;top:400.30px;color:#c06a14">Parameters</span>
<span class="lg b" style="left:8.70px;top:435.60px;color:#c06a14">Histogram</span>
<span class="lg sb" style="left:13.30px;top:448.30px;color:#c06a14;margin-top:2.4px">0</span>
<span class="lg sb" style="left:80.00px;top:448.30px;color:#c06a14;margin-top:2.4px">1</span>
<span class="lg sb" style="left:146.70px;top:448.30px;color:#c06a14;margin-top:2.4px">2</span>
<span class="lg sb" style="left:213.40px;top:448.30px;color:#c06a14;margin-top:2.4px">3</span>
<span class="lg sb" style="left:280.10px;top:448.30px;color:#c06a14;margin-top:2.4px">4</span>
<span class="lg sb" style="left:346.80px;top:448.30px;color:#c06a14;margin-top:2.4px">5</span>
<span class="lg sb" style="left:413.50px;top:448.30px;color:#c06a14;margin-top:2.4px">6</span>
<span class="lg sb" style="left:480.20px;top:448.30px;color:#c06a14;margin-top:2.4px">7</span>
<span class="lg sb" style="left:546.90px;top:448.30px;color:#c06a14;margin-top:2.4px">8</span>
<span class="lg sb" style="left:613.60px;top:448.30px;color:#c06a14;margin-top:2.4px">9</span>
<span class="lg sb" style="left:680.30px;top:448.30px;color:#c06a14;margin-top:2.4px">10</span>
<span class="lg sb" style="left:747.00px;top:448.30px;color:#c06a14;margin-top:2.4px">11</span>
<span class="lg sb" style="left:813.70px;top:448.30px;color:#c06a14;margin-top:2.4px">12</span>
<span class="lg sb" style="left:880.40px;top:448.30px;color:#c06a14;margin-top:2.4px">13</span>
<span class="lg sb" style="left:947.10px;top:448.30px;color:#c06a14;margin-top:2.4px">14</span>
<span class="lg sb" style="left:1013.80px;top:448.30px;color:#c06a14;margin-top:2.4px">15</span>
<span class="t b" style="left:10.6px;top:417.5px;color:#c06a14">Tenuring Threshold:</span>
<span class="t v" style="left:122.3px;top:418px;color:#c06a14">6</span>
<span class="t b" style="left:211.1px;top:417.5px;color:#c06a14">Max Tenuring Threshold:</span>
<span class="t v" style="left:345.1px;top:418px;color:#c06a14">6</span>
<span class="t b" style="left:456.1px;top:417.5px;color:#c06a14">Desired Survivor Size:</span>
<span class="t v" style="left:585.2px;top:418px;color:#c06a14">161054720</span>
<span class="t b" style="left:766.1px;top:417.5px;color:#c06a14">Current Survivor Size:</span>
<span class="t v" style="left:895.2px;top:418px;color:#c06a14">322109440</span>
</body></html>
